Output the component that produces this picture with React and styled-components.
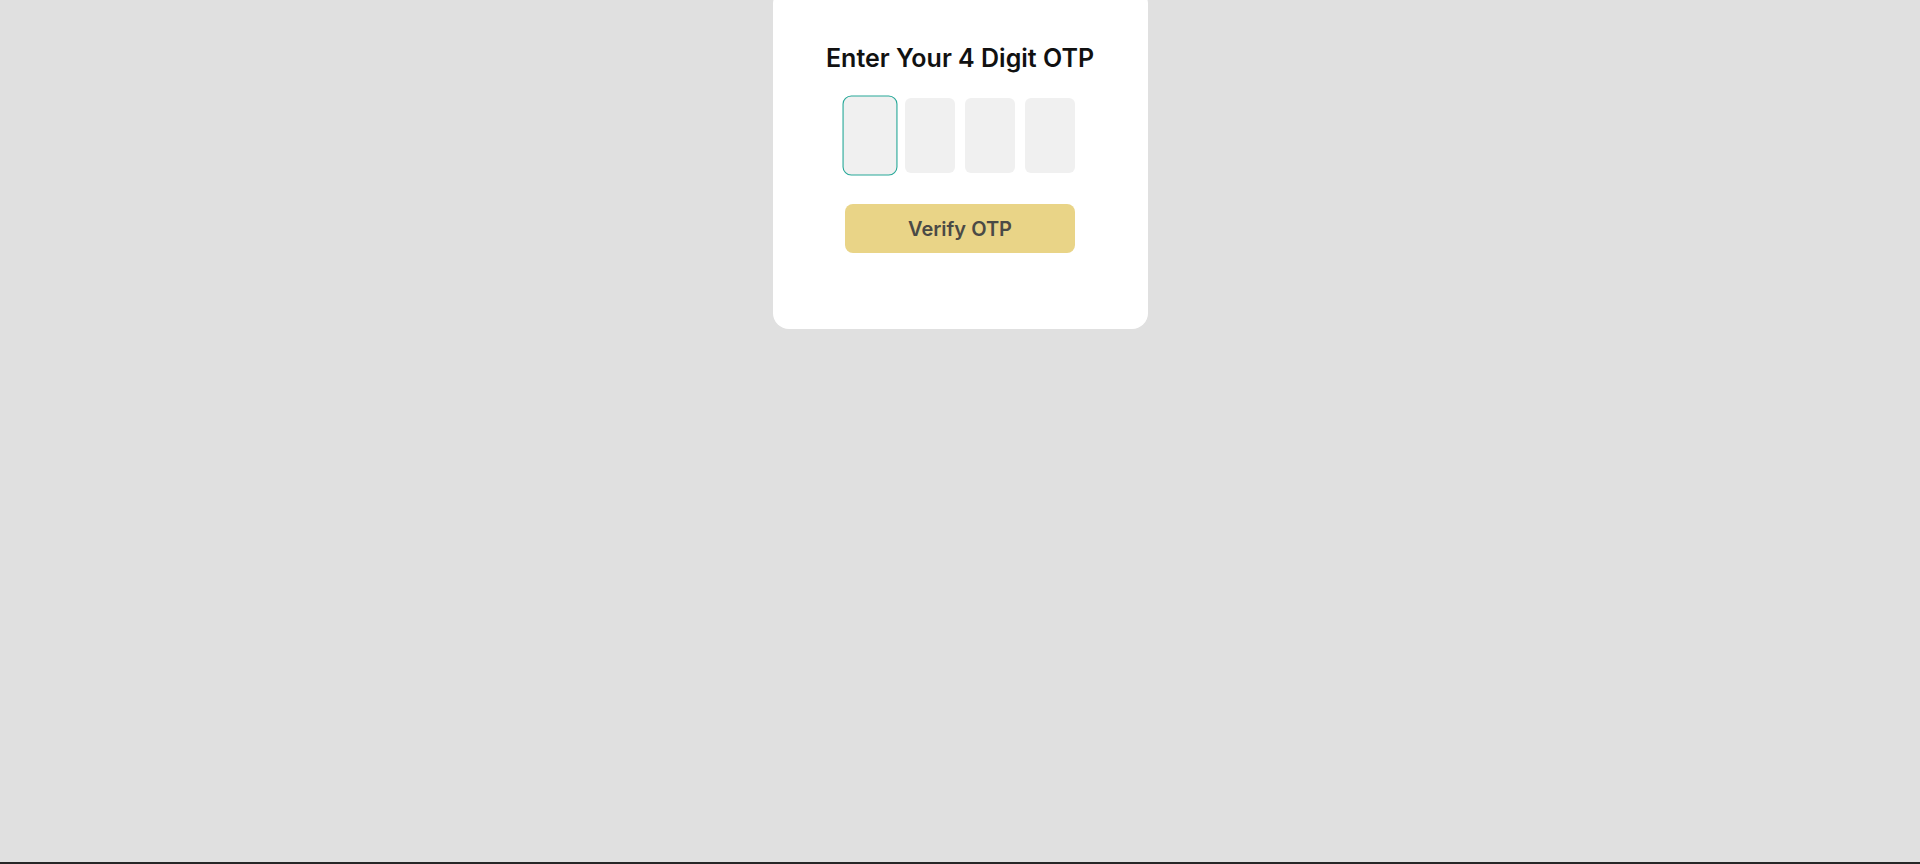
import React, { useState } from 'react'
import styled, { createGlobalStyle } from 'styled-components'

const Global = createGlobalStyle`
  html, body {
    margin: 0;
    padding: 0;
    background: #262626;
    overflow: hidden;
  }
  * { box-sizing: border-box; }
`;

const Page = styled.div`
  height: 862px;
  background: #e0e0e0;
  display: flex;
  justify-content: center;
  align-items: flex-start;
  font-family: Inter, "Noto Sans", sans-serif;
`;

const Card = styled.div`
  width: 375px;
  margin-top: -12px;
  padding: 55px 0 76px;
  background: #ffffff;
  border-radius: 16px;
  display: flex;
  flex-direction: column;
  align-items: center;
`;

const Title = styled.h2`
  margin: 0;
  font-size: 25px;
  line-height: 30px;
  font-weight: 600;
  color: #111111;
`;

const Boxes = styled.div`
  display: flex;
  gap: 10px;
  margin-top: 25px;
`;

const DigitBox = styled.input`
  width: 50px;
  height: 75px;
  border: none;
  border-radius: 6px;
  background: #f0f0f0;
  outline: none;
  text-align: center;
  font-family: inherit;
  font-size: 24px;
  padding: 0;
  ${props => props.active && `
    border: 1px solid #26a898;
    border-radius: 8px;
    transform: scale(1.1, 1.067);
  `}
`;

const Button = styled.button`
  margin-top: 31px;
  width: 230px;
  height: 49px;
  border: none;
  border-radius: 8px;
  background: #e9d487;
  color: #4a4a46;
  font-family: inherit;
  font-size: 20px;
  font-weight: 600;
  cursor: pointer;
`;

function App() {
  const [digits, setDigits] = useState(['', '', '', ''])
  const onChange = (i, v) => {
    const next = [...digits]
    next[i] = v.slice(-1)
    setDigits(next)
  }
  return (
    <>
      <Global />
      <Page>
        <Card>
          <Title>Enter Your 4 Digit OTP</Title>
          <Boxes>
            {digits.map((d, i) => (
              <DigitBox key={i} active={i === 0} value={d} maxLength={1}
                onChange={e => onChange(i, e.target.value)} />
            ))}
          </Boxes>
          <Button>Verify OTP</Button>
        </Card>
      </Page>
    </>
  )
}

export default App
